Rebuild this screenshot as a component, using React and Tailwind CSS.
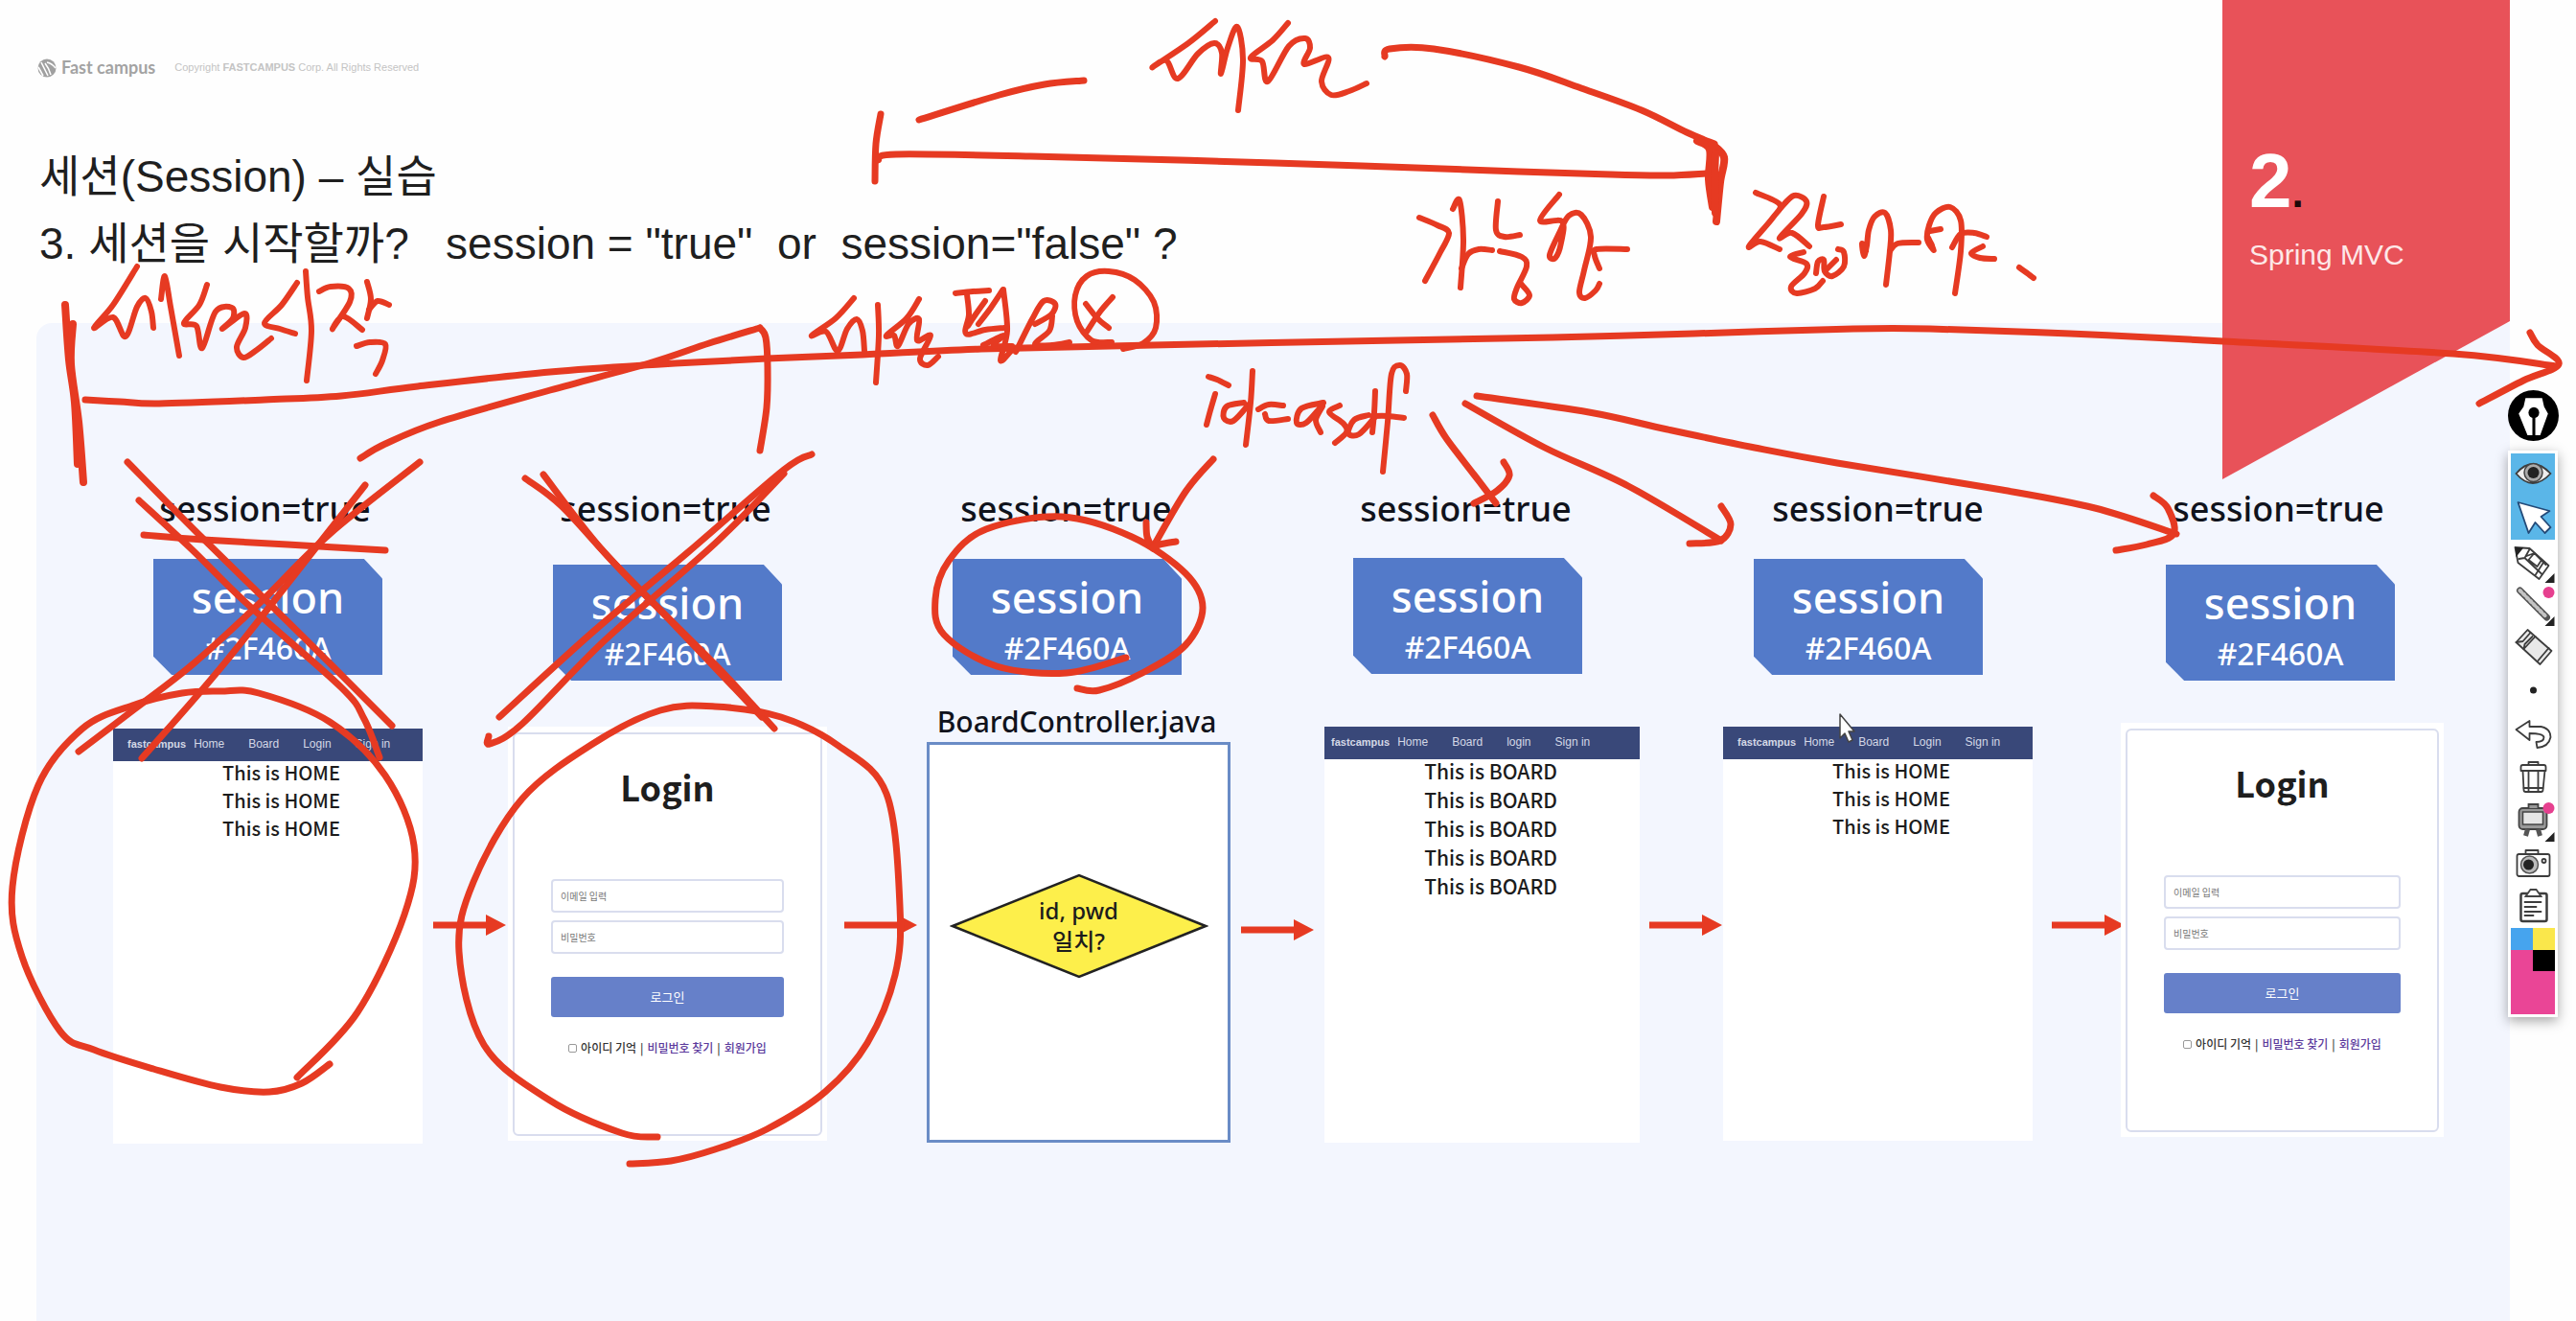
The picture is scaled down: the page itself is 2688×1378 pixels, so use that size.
import React from "react";

const INK = "#e63a22";

// Turns a list of points into a smooth path (Catmull-Rom spline as cubic curves).
function smooth(p) {
  let d = `M${p[0][0]} ${p[0][1]}`;
  for (let i = 0; i < p.length - 1; i++) {
    const a = p[i - 1] || p[i];
    const b = p[i];
    const c = p[i + 1];
    const e = p[i + 2] || c;
    const x1 = b[0] + (c[0] - a[0]) / 6;
    const y1 = b[1] + (c[1] - a[1]) / 6;
    const x2 = c[0] - (e[0] - b[0]) / 6;
    const y2 = c[1] - (e[1] - b[1]) / 6;
    d += `C${x1} ${y1} ${x2} ${y2} ${c[0]} ${c[1]}`;
  }
  return d;
}

// Long pen strokes: time lines, circles, crosses and arrows.
const curves = [
  [[89, 417], [125, 419], [166, 421], [276, 417], [356, 413], [436, 403], [574, 388], [689, 380], [800, 374], [900, 370], [1024, 364], [1203, 360], [1458, 355], [1620, 352], [1767, 348], [1934, 343], [2014, 343], [2160, 348], [2320, 356], [2560, 369], [2667, 382]],
  [[2640, 347], [2648, 360], [2670, 380], [2633, 397], [2587, 421]],
  [[376, 478], [402, 463], [459, 440], [574, 407], [677, 379], [740, 358], [793, 342]],
  [[793, 342], [799, 352], [801, 383], [800, 425], [793, 470]],
  [[959, 125], [1043, 99], [1090, 88], [1131, 84]],
  [[1445, 59], [1450, 51], [1496, 51], [1585, 70], [1650, 92], [1713, 115], [1760, 138], [1789, 150]],
  [[919, 119], [914, 150], [913, 189]],
  [[916, 167], [935, 161], [1075, 163], [1330, 170], [1585, 179], [1681, 182], [1740, 183], [1780, 181]],
  [[150, 558], [212, 563], [300, 568], [402, 574]],
  [[133, 482], [207, 557], [316, 664], [409, 757]],
  [[145, 522], [200, 573], [258, 630], [356, 717], [380, 750], [396, 790]],
  [[438, 482], [344, 557], [270, 630], [201, 693], [140, 740], [82, 784]],
  [[381, 506], [333, 567], [230, 697], [148, 791]],
  [[548, 499], [586, 528], [649, 596], [746, 693], [785, 735], [808, 760]],
  [[567, 495], [626, 571], [700, 648], [795, 748]],
  [[847, 474], [818, 490], [718, 576], [620, 658], [521, 748]],
  [[818, 494], [746, 567], [631, 668], [545, 755], [511, 776], [510, 768]],
  [[344, 1110], [315, 1130], [281, 1139], [230, 1134], [160, 1115], [98, 1095], [63, 1076], [23, 998], [13, 925], [40, 819], [86, 760], [138, 736], [190, 723], [230, 721], [270, 723], [344, 753], [402, 809], [432, 882], [422, 954], [373, 1056], [310, 1124]],
  [[686, 1186], [649, 1182], [574, 1148], [505, 1090], [479, 993], [494, 920], [545, 833], [620, 775], [689, 741], [746, 737], [815, 748], [875, 778], [925, 828], [939, 945], [934, 1017], [905, 1088], [861, 1139], [800, 1178], [746, 1199], [700, 1211], [657, 1214]],
  [[1175, 686], [1113, 702], [1040, 695], [985, 662], [976, 625], [990, 585], [1029, 552], [1108, 539], [1181, 560], [1237, 598], [1255, 634], [1237, 673], [1192, 702], [1147, 720], [1124, 718]],
  [[1266, 479], [1237, 513], [1203, 571]],
  [[1196, 545], [1197, 560], [1203, 572]],
  [[1227, 565], [1210, 568], [1203, 571]],
  [[1495, 433], [1509, 457], [1538, 495], [1561, 525]],
  [[1569, 482], [1575, 496], [1562, 512], [1538, 525]],
  [[1529, 421], [1612, 467], [1699, 507], [1796, 564]],
  [[1796, 528], [1806, 547], [1795, 564], [1763, 567]],
  [[1541, 413], [1658, 430], [1740, 448], [1831, 467], [1917, 483], [2089, 511], [2186, 530], [2271, 557]],
  [[2247, 517], [2262, 530], [2268, 557], [2240, 568], [2208, 574]],
];

// Heavy end bars of the two time lines.
const bars = [
  [[68, 318], [72, 375], [78, 420], [81, 484]],
  [[76, 338], [74, 380], [82, 440], [87, 503]],
  [[1771, 147], [1784, 156], [1783, 187], [1787, 216]],
  [[1786, 150], [1799, 164], [1795, 190], [1791, 231]],
  [[1790, 160], [1789, 190], [1790, 222]],
];

// Hand-written notes.
const notes = [
  [[143, 278], [118, 318], [98, 342], [118, 331], [131, 351], [143, 320], [152, 311], [158, 325], [160, 342]],
  [[168, 312], [172, 288], [178, 320], [187, 371]],
  [[216, 297], [208, 318], [192, 337], [205, 340], [211, 363], [225, 325], [242, 321], [243, 332], [232, 343], [255, 327], [256, 342], [247, 362], [254, 373], [268, 365], [283, 353]],
  [[310, 295], [294, 318], [276, 337], [292, 343], [308, 348]],
  [[319, 283], [321, 310], [325, 345], [320, 397]],
  [[333, 304], [345, 299], [364, 301], [365, 315], [347, 343], [358, 330], [378, 344]],
  [[383, 294], [387, 312], [383, 332]],
  [[385, 323], [394, 314], [406, 318]],
  [[372, 361], [386, 357], [402, 359], [399, 376], [392, 390]],
  [[1268, 22], [1240, 45], [1203, 70], [1217, 63], [1229, 82], [1250, 56], [1267, 45], [1275, 55], [1274, 77], [1281, 50], [1291, 28], [1297, 62], [1292, 115]],
  [[1344, 24], [1328, 42], [1305, 60], [1317, 64], [1323, 85], [1345, 48], [1362, 40], [1367, 50], [1361, 67], [1386, 60], [1379, 85], [1389, 99], [1408, 95], [1426, 87]],
  [[1481, 227], [1500, 235], [1512, 243], [1503, 263], [1487, 293]],
  [[1516, 218], [1523, 209], [1527, 250], [1524, 300]],
  [[1525, 280], [1532, 265], [1543, 260], [1557, 261]],
  [[1563, 210], [1561, 240], [1570, 247], [1586, 245]],
  [[1565, 262], [1588, 268], [1593, 278], [1583, 300], [1580, 312], [1588, 316], [1596, 308], [1588, 297]],
  [[1627, 203], [1607, 230], [1630, 231], [1629, 253], [1623, 269], [1617, 266], [1627, 243], [1637, 225], [1650, 224], [1660, 247], [1653, 282], [1648, 305], [1654, 311], [1665, 303], [1669, 296]],
  [[1698, 260], [1666, 260], [1664, 267], [1669, 280]],
  [[1832, 201], [1857, 213], [1850, 227], [1825, 257], [1837, 252], [1857, 260]],
  [[1858, 217], [1872, 204], [1885, 210], [1880, 223], [1857, 248], [1870, 243], [1888, 257]],
  [[1903, 205], [1897, 235], [1903, 237], [1921, 234]],
  [[1882, 263], [1868, 268], [1885, 275], [1883, 285], [1869, 299], [1875, 306], [1894, 301], [1902, 293]],
  [[1895, 285], [1897, 273], [1903, 271], [1904, 283], [1912, 288], [1924, 278], [1924, 263], [1918, 260]],
  [[1906, 281], [1916, 271]],
  [[1947, 262], [1943, 254], [1945, 267], [1948, 256], [1950, 240], [1956, 226], [1967, 222], [1973, 240], [1972, 262], [1968, 297]],
  [[1972, 262], [1980, 254], [2002, 253]],
  [[2016, 256], [2012, 248], [2018, 261], [2011, 250], [2013, 235], [2020, 222], [2035, 216], [2046, 230], [2046, 262], [2040, 306]],
  [[2014, 241], [2025, 239]],
  [[2037, 258], [2046, 244], [2060, 243], [2073, 247]],
  [[2069, 257], [2057, 264], [2066, 269], [2081, 270]],
  [[2107, 279], [2114, 284], [2122, 290]],
  [[891, 311], [872, 332], [847, 350], [862, 346], [874, 366], [884, 343], [894, 333], [900, 345], [902, 366]],
  [[916, 318], [917, 350], [914, 399]],
  [[959, 312], [946, 332], [925, 350], [933, 350], [937, 361], [948, 338], [959, 333], [957, 355], [971, 350], [960, 374], [968, 381], [979, 372]],
  [[997, 306], [1015, 304], [1032, 303]],
  [[1009, 307], [1011, 328], [1008, 348], [1028, 344], [1048, 342]],
  [[1028, 314], [1018, 328], [1010, 340]],
  [[1046, 303], [1034, 321], [1021, 338]],
  [[1047, 302], [1051, 345], [1044, 376], [1056, 365]],
  [[1026, 360], [1047, 350], [1037, 360], [1056, 361]],
  [[1060, 367], [1077, 333], [1089, 314], [1101, 317], [1097, 328], [1080, 338]],
  [[1098, 330], [1095, 345], [1080, 359], [1098, 360], [1116, 357]],
  [[1133, 317], [1145, 332], [1157, 342]],
  [[1161, 310], [1148, 325], [1134, 346]],
  [[1160, 357], [1139, 355], [1124, 335], [1122, 308], [1134, 288], [1157, 283], [1184, 292], [1204, 315], [1206, 342], [1193, 358], [1172, 364]],
  [[1261, 393], [1270, 396], [1282, 402]],
  [[1268, 411], [1263, 428], [1259, 443]],
  [[1298, 420], [1280, 424], [1277, 436], [1287, 439], [1303, 422]],
  [[1307, 387], [1305, 420], [1300, 464]],
  [[1313, 427], [1324, 422], [1339, 423]],
  [[1320, 432], [1324, 439], [1344, 437]],
  [[1381, 420], [1358, 426], [1353, 441], [1363, 441], [1380, 423], [1373, 438], [1378, 451]],
  [[1398, 423], [1387, 430], [1402, 442], [1405, 451], [1393, 462]],
  [[1428, 433], [1413, 438], [1407, 452], [1418, 453], [1434, 436]],
  [[1435, 408], [1434, 430], [1432, 451]],
  [[1467, 408], [1468, 390], [1461, 381], [1452, 390], [1448, 440], [1443, 492]],
  [[1432, 434], [1448, 434], [1465, 436]],
];

function Ink() {
  return (
    <svg
      className="pointer-events-none absolute inset-0 z-20 h-full w-full"
      viewBox="0 0 2688 1378"
      preserveAspectRatio="none"
      fill="none"
      stroke={INK}
      strokeLinecap="round"
      strokeLinejoin="round"
      aria-hidden="true"
    >
      <g strokeWidth="7">{curves.map((p, i) => <path key={i} d={smooth(p)} />)}</g>
      <g strokeWidth="8">{bars.map((p, i) => <path key={i} d={smooth(p)} />)}</g>
      <g strokeWidth="6">{notes.map((p, i) => <path key={i} d={smooth(p)} />)}</g>
      <path
        d="M1920 745V770L1925 765L1929 774L1933 772L1929 763H1935Z"
        fill="#fff"
        stroke="#444"
        strokeWidth="1.5"
      />
    </svg>
  );
}

function SessionHead({ boxClass = "", labelClass = "" }) {
  return (
    <>
      <p className={"text-center text-[36px] leading-[44px] font-medium whitespace-nowrap text-[#10131c] " + labelClass}>
        session=true
      </p>
      <div className={"flex justify-center " + boxClass}>
        <div className="h-[121px] w-[239px] bg-[#537ac9] pt-[10px] text-center font-medium text-white [clip-path:polygon(0_0,92%_0,100%_17%,100%_100%,8%_100%,0_84%)]">
          <p className="text-[45px] leading-[60px]">session</p>
          <p className="text-[32px] leading-[46px]">#2F460A</p>
        </div>
      </div>
    </>
  );
}

function PageShot({ word, count, login = "Login", className = "", navClass = "", listClass = "" }) {
  return (
    <div className={"bg-white " + className}>
      <nav className={"flex h-[34px] items-center gap-[25px] bg-[#394879] pb-[2px] font-['Liberation_Sans',sans-serif] text-[12px] whitespace-nowrap text-[#d4d8e6] " + navClass}>
        <div className="flex items-center gap-2">
          <a href="#top" className="text-[11px] font-bold">fastcampus</a>
          <a href="#home">Home</a>
        </div>
        <a href="#board">Board</a>
        <a href="#login">{login}</a>
        <a href="#signin">Sign in</a>
      </nav>
      <div className={"-mt-[3px] text-center font-['Noto_Sans_CJK_KR',sans-serif] font-medium text-[#1c1c1c] " + listClass}>
        {Array.from({ length: count }, (_, i) => (
          <p key={i}>This is {word}</p>
        ))}
      </div>
    </div>
  );
}

function LoginCard({ id, className = "" }) {
  return (
    <div className={"h-[432px] bg-white px-[5px] pt-[6px] pb-[5px] font-['Noto_Sans_CJK_KR',sans-serif] " + className}>
      <form className="flex h-full flex-col rounded-md border-2 border-[#d9ddee] px-[38px]" onSubmit={(e) => e.preventDefault()}>
        <h2 className="mt-[27px] text-center text-[36px] leading-[54px] font-bold text-[#1e1e1e]">Login</h2>
        <input
          aria-label="이메일 입력"
          placeholder="이메일 입력"
          className="mt-[70px] h-[35px] w-full rounded border-2 border-[#d9ddee] px-2 text-[10px] placeholder:text-[#777]"
        />
        <input
          aria-label="비밀번호"
          placeholder="비밀번호"
          type="password"
          className="mt-2 h-[35px] w-full rounded border-2 border-[#d9ddee] px-2 text-[10px] placeholder:text-[#777]"
        />
        <button type="submit" className="mt-[24px] h-[42px] w-full rounded-[3px] bg-[#6680c9] text-[13px] text-white">
          로그인
        </button>
        <div className="mt-[23px] flex items-center justify-center gap-1 text-[12px] leading-[18px] font-medium whitespace-nowrap text-[#333]">
          <input id={id} type="checkbox" className="size-[9px] appearance-none rounded-[2px] border border-[#999]" />
          <label htmlFor={id}>아이디 기억</label>
          <span>|</span>
          <a href="#find" className="text-[#5b3a9c]">비밀번호 찾기</a>
          <span>|</span>
          <a href="#join" className="text-[#5b3a9c]">회원가입</a>
        </div>
      </form>
    </div>
  );
}

function Arrow({ className = "pt-[617px] pl-[8px]" }) {
  return (
    <div className={"flex min-w-0 justify-center " + className}>
      <svg className="h-[22px] w-[76px] shrink-0" viewBox="0 0 76 22" aria-hidden="true">
        <path d="M0 7.500H55V0L76 11L55 22V14.500H0Z" fill={INK} />
      </svg>
    </div>
  );
}

const line = { fill: "none", stroke: "#3d3d3d", strokeWidth: 1.8, strokeLinejoin: "round", strokeLinecap: "round" };
const corner = <path d="M45 35V45H35Z" fill="#222" />;

const tools = [
  ["보기", <><path d="M5 21Q22 1 41 21Q22 41 5 21Z" fill="#eee" stroke="#3d3d3d" strokeWidth="1.8" /><circle cx="23" cy="20" r="9.500" fill="#aaa" stroke="#444" strokeWidth="1.500" /><circle cx="23" cy="20" r="6" fill="#222" /></>],
  ["선택", <path d="M7 6L40 15L31 21L41 32L35 38L25 27L18 38Z" fill="#fff" stroke="#234a78" strokeWidth="1.8" strokeLinejoin="round" />],
  ["연필", <><path {...line} d="M4 8L19 9L39 27L29 41L7 24Z" /><path d="M4 8H13L5 18Z" fill="#222" /><path {...line} d="M8 20L14 19L19 10M14 19L32 36M16 17L24 14L36 26M24 14L18 21L27 28L31 22" /><path {...line} d="M34 23L25 37" />{corner}</>],
  ["직선", <><path d="M9 8L37 36" stroke="#555" strokeWidth="7" strokeLinecap="round" /><path d="M9 8L37 36" stroke="#c4c4c4" strokeWidth="4" strokeLinecap="round" strokeDasharray="2 3" /><circle cx="39" cy="10" r="6" fill="#e6408f" />{corner}</>],
  ["지우개", <><path d="M17 4L42 26L30 40L5 17Z" fill="#e9e9e9" stroke="#3d3d3d" strokeWidth="1.8" strokeLinejoin="round" /><path {...line} d="M25 11L13 24M39 23L28 36M5 17L12 16L20 7M13 24L14 19L22 11" /></>],
  ["굵기", <circle cx="23" cy="22" r="3.500" fill="#222" />],
  ["되돌리기", <path {...line} d="M5 18L19 9V15H31Q41 17 41 26Q39 36 27 37L26 31Q34 31 34 26Q33 22 19 22V29Z" />],
  ["지우기", <><path {...line} d="M10 12Q10 10 12 10H34Q36 10 36 12V16H10ZM18 10V7H28V10M12 16L13 36Q13 38 15 38H31Q33 38 33 36L35 16M18 17V37M28 17V37" /><path {...line} d="M13 34H33" /></>],
  ["칠판", <><rect x="8" y="10" width="29" height="22" rx="4" fill="#999" stroke="#444" strokeWidth="1.8" /><rect x="12" y="14" width="21" height="13" fill="#e6e6e6" stroke="#444" strokeWidth="1.500" /><path d="M18 10V6H28V10" fill="#999" stroke="#444" strokeWidth="1.8" /><path d="M17 32L15 39M28 32L30 39" stroke="#555" strokeWidth="5" /><circle cx="39" cy="10" r="6" fill="#e6408f" />{corner}</>],
  ["화면 캡처", <><rect {...line} x="6" y="13" width="34" height="23" rx="2" /><path {...line} d="M15 13V9H28V13" /><circle cx="19" cy="24" r="9" fill="#bbb" stroke="#555" strokeWidth="1.500" /><circle cx="18" cy="24" r="5.500" fill="#222" /><circle {...line} cx="34" cy="20" r="2" /></>],
  ["클립보드", <><rect {...line} x="10" y="9" width="27" height="29" rx="2" strokeWidth="2.500" /><path d="M15 12L20 5H26L31 12Z" fill="#fff" stroke="#444" strokeWidth="1.800" /><path {...line} d="M14 18H31M14 23H26M14 28H31M14 32H23" /></>],
];

function Toolbar() {
  return (
    <aside className="absolute top-[407px] right-[19px] z-30 flex w-[52px] flex-col items-center">
      <button type="button" aria-label="펜" className="size-[53px] shrink-0">
        <svg viewBox="0 0 52 52" className="size-full" aria-hidden="true">
          <circle cx="26" cy="26" r="26" fill="#000" />
          <path d="M18 8H35L37 17L41 24L33 46H28V27H25V46H20L11 24L16 17Z" fill="#fff" />
          <circle cx="26.500" cy="23" r="5.500" fill="#000" />
        </svg>
      </button>
      <div className="mt-[10px] w-full bg-white px-[3px] py-[3px] shadow-[0_4px_12px_rgba(0,0,0,0.35)]">
        {tools.map(([name, icon], i) => (
          <button
            key={name}
            type="button"
            aria-label={name}
            className={i < 2 ? "block h-[45px] w-full bg-[#5ab6e8]" : "block h-[45px] w-full bg-white"}
          >
            <svg viewBox="0 0 45 45" className="size-full" aria-hidden="true">{icon}</svg>
          </button>
        ))}
        <div className="grid h-[90px] grid-cols-2 grid-rows-4 bg-[#ea4596]">
          <button type="button" aria-label="파랑" className="bg-[#46a4ee]" />
          <button type="button" aria-label="노랑" className="bg-[#fae74b]" />
          <button type="button" aria-label="분홍" className="bg-[#ea4596]" />
          <button type="button" aria-label="검정" className="bg-black" />
        </div>
      </div>
    </aside>
  );
}

export default function App() {
  return (
    <div className="relative flex min-h-screen flex-col overflow-hidden bg-[#fefefe] font-['Noto_Sans','Noto_Sans_CJK_KR',sans-serif]">
      <header className="flex h-[337px] justify-between pr-[69px] pl-[39px]">
        <div className="pt-[58px]">
          <div className="flex h-[25px] items-center whitespace-nowrap text-[#a3a3a3]">
            <svg viewBox="0 0 20 20" className="size-[20px]" aria-hidden="true">
              <circle cx="10" cy="10" r="9.500" fill="#a0a0a0" />
              <path d="M4 4L11 18M8 5Q12 10 14 17M10 4Q15 5 19 10M1 9L6 18" stroke="#fff" strokeWidth="1.600" fill="none" />
            </svg>
            <span className="ml-[5px] font-['Lato',sans-serif] text-[18px] font-bold">Fast campus</span>
            <span className="ml-[20px] font-['Liberation_Sans',sans-serif] text-[11px] text-[#c4c4c4]">
              Copyright <b>FASTCAMPUS</b> Corp. All Rights Reserved
            </span>
          </div>
          <h1 className="mt-[66px] pl-[2px] font-['Liberation_Sans','Noto_Sans_CJK_KR',sans-serif] text-[46px] leading-[70px] font-normal whitespace-pre text-[#1f1f1f]">
            세션(Session) – 실습{"\n"}3. 세션을 시작할까?{"   "}session = "true"{"  "}or{"  "}session="false" ?
          </h1>
        </div>
        <div className="z-10 h-[500px] w-[300px] shrink-0 bg-[#e85259] pt-[144px] pl-[28px] font-['Liberation_Sans',sans-serif] text-white [clip-path:polygon(0_0,100%_0,100%_67%,0_100%)]">
          <p className="text-[80px] leading-[90px] font-bold">
            2<span className="text-[44px] text-[#1c0808]">.</span>
          </p>
          <p className="mt-[2px] text-[30px] leading-[36px] text-[#fde8e8]">Spring MVC</p>
        </div>
      </header>

      <main className="mr-[69px] ml-[38px] grid flex-1 grid-cols-[80fr_323fr_89fr_333fr_104fr_317fr_98fr_329fr_87fr_323fr_92fr_337fr_69fr] items-start rounded-tl-2xl bg-[#f3f6fe]">
        <span />
        <section className="min-w-0 pt-[172px]">
          <SessionHead labelClass="pr-[6px]" boxClass="mt-[30px]" />
          <PageShot word="HOME" count={3} className="mt-[56px] h-[433px]" navClass="pl-[15px]" listClass="pl-[28px] text-[20px] leading-[29px]" />
        </section>
        <Arrow />
        <section className="min-w-0 pt-[172px]">
          <SessionHead labelClass="pr-[4px]" boxClass="mt-[36px]" />
          <LoginCard id="remember-a" className="mt-[48px]" />
        </section>
        <Arrow />
        <section className="min-w-0 pt-[172px]">
          <SessionHead labelClass="pr-[26px]" boxClass="mt-[30px] pr-[24px]" />
          <h2 className="mt-[28px] pr-[4px] text-center text-[30px] leading-[42px] font-medium whitespace-nowrap text-[#10131c]">BoardController.java</h2>
          <div className="flex h-[418px] items-center justify-center border-[3px] border-[#6a8cc6] bg-white pb-[34px]">
            <div className="relative flex h-[110px] w-[270px] items-center justify-center">
              <svg viewBox="0 0 270 110" className="absolute inset-0 size-full" aria-hidden="true">
                <path d="M3 55L135 2L267 55L135 108Z" fill="#fdef4b" stroke="#222" strokeWidth="2.500" />
              </svg>
              <p className="relative text-center text-[24px] leading-[32px] font-medium text-[#1c1c1c]">
                id, pwd<br />일치?
              </p>
            </div>
          </div>
        </section>
        <Arrow className="pt-[622px]" />
        <section className="min-w-0 pt-[172px]">
          <SessionHead labelClass="pr-[34px]" boxClass="mt-[29px] pr-[30px]" />
          <PageShot word="BOARD" count={5} login="login" className="mt-[55px] h-[434px]" navClass="pl-[7px]" listClass="pl-[18px] text-[21px] leading-[30px]" />
        </section>
        <Arrow />
        <section className="min-w-0 pt-[172px]">
          <SessionHead labelClass="" boxClass="mt-[30px] pr-[20px]" />
          <PageShot word="HOME" count={3} className="mt-[54px] h-[432px]" navClass="pl-[15px]" listClass="pl-[28px] text-[20px] leading-[29px]" />
        </section>
        <Arrow className="pt-[617px] pl-[24px]" />
        <section className="min-w-0 pt-[172px]">
          <SessionHead labelClass="pr-[8px]" boxClass="mt-[36px] pr-[4px]" />
          <LoginCard id="remember-b" className="mt-[44px]" />
        </section>
        <span />
      </main>

      <Ink />
      <Toolbar />
    </div>
  );
}
